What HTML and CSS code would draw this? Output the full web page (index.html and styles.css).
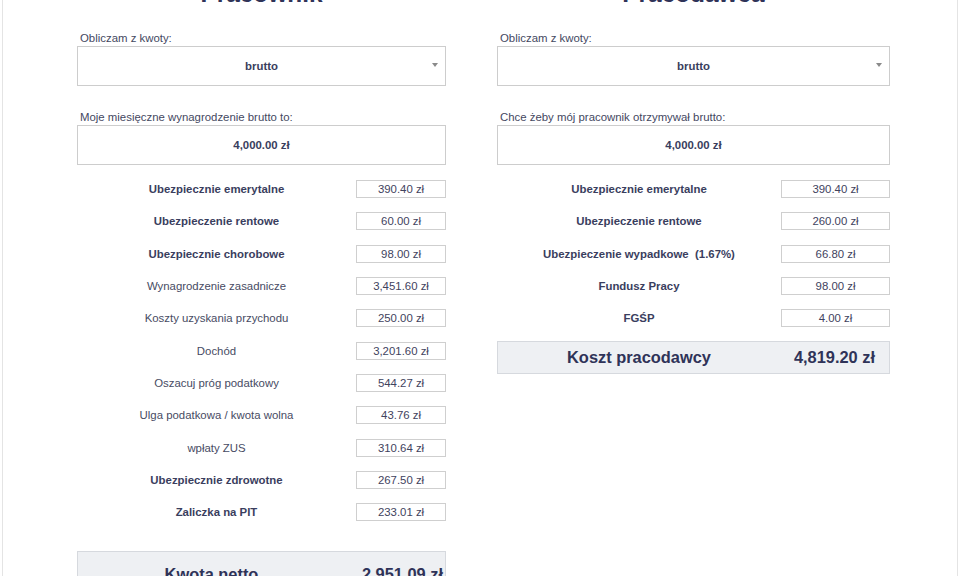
FILE: index.html
```html
<!DOCTYPE html>
<html lang="pl">
<head>
<meta charset="utf-8">
<title>Kalkulator wynagrodzeń</title>
<link rel="stylesheet" href="styles.css">
</head>
<body>
<div class="frame">
  <div class="columns">
    <section class="col col-left">
      <h2 class="title">Pracownik</h2>
      <div class="field">
        <div class="field-label">Obliczam z kwoty:</div>
        <div class="select"><span>brutto</span><i class="arrow"></i></div>
      </div>
      <div class="field field-2">
        <div class="field-label">Moje miesięczne wynagrodzenie brutto to:</div>
        <div class="input"><span>4,000.00 zł</span></div>
      </div>
      <div class="rows">
        <div class="row"><div class="lbl b">Ubezpiecznie emerytalne</div><div class="val">390.40 zł</div></div>
        <div class="row"><div class="lbl b">Ubezpieczenie rentowe</div><div class="val">60.00 zł</div></div>
        <div class="row"><div class="lbl b">Ubezpiecznie chorobowe</div><div class="val">98.00 zł</div></div>
        <div class="row"><div class="lbl">Wynagrodzenie zasadnicze</div><div class="val">3,451.60 zł</div></div>
        <div class="row"><div class="lbl">Koszty uzyskania przychodu</div><div class="val">250.00 zł</div></div>
        <div class="row"><div class="lbl">Dochód</div><div class="val">3,201.60 zł</div></div>
        <div class="row"><div class="lbl">Oszacuj próg podatkowy</div><div class="val">544.27 zł</div></div>
        <div class="row"><div class="lbl">Ulga podatkowa / kwota wolna</div><div class="val">43.76 zł</div></div>
        <div class="row"><div class="lbl">wpłaty ZUS</div><div class="val">310.64 zł</div></div>
        <div class="row"><div class="lbl b">Ubezpiecznie zdrowotne</div><div class="val">267.50 zł</div></div>
        <div class="row"><div class="lbl b">Zaliczka na PIT</div><div class="val">233.01 zł</div></div>
      </div>
      <div class="total total-left"><div class="t-lbl">Kwota netto</div><div class="t-val">2,951.09 zł</div></div>
    </section>
    <section class="col col-right">
      <h2 class="title">Pracodawca</h2>
      <div class="field">
        <div class="field-label">Obliczam z kwoty:</div>
        <div class="select"><span>brutto</span><i class="arrow"></i></div>
      </div>
      <div class="field field-2">
        <div class="field-label">Chce żeby mój pracownik otrzymywał brutto:</div>
        <div class="input"><span>4,000.00 zł</span></div>
      </div>
      <div class="rows">
        <div class="row"><div class="lbl b">Ubezpiecznie emerytalne</div><div class="val">390.40 zł</div></div>
        <div class="row"><div class="lbl b">Ubezpieczenie rentowe</div><div class="val">260.00 zł</div></div>
        <div class="row"><div class="lbl b">Ubezpieczenie wypadkowe&nbsp; (1.67%)</div><div class="val">66.80 zł</div></div>
        <div class="row"><div class="lbl b">Fundusz Pracy</div><div class="val">98.00 zł</div></div>
        <div class="row"><div class="lbl b">FGŚP</div><div class="val">4.00 zł</div></div>
      </div>
      <div class="total total-right"><div class="t-lbl">Koszt pracodawcy</div><div class="t-val">4,819.20 zł</div></div>
    </section>
  </div>
</div>
</body>
</html>
```

FILE: styles.css
```css
html, body {
  margin: 0;
  padding: 0;
  background: #ffffff;
  overflow: hidden;
}
body {
  width: 960px;
  height: 576px;
  font-family: "Liberation Sans", Arial, Helvetica, sans-serif;
  color: #3a3e5e;
  font-size: 11.4px;
}
.frame {
  margin: 0 2px 0 2px;
  height: 576px;
  border-left: 1px solid #e4e4e4;
  border-right: 1px solid #e4e4e4;
  box-sizing: border-box;
}
.columns {
  display: grid;
  grid-template-columns: 369px 393px;
  column-gap: 51px;
  padding-left: 74px;
}
.col {
  display: flex;
  flex-direction: column;
}
.col-left { --valw: 90px; }
.col-right { --valw: 109px; }
.title {
  margin: -18px 0 0 0;
  font-size: 24.4px;
  line-height: 24px;
  font-weight: bold;
  text-align: center;
  color: #2f3358;
}
.field {
  margin-top: 25px;
  display: flex;
  flex-direction: column;
}
.field-2 {
  margin-top: 24px;
}
.field-label {
  line-height: 14px;
  padding-left: 3px;
  margin-bottom: 1px;
  color: #44485f;
}
.select, .input {
  height: 40px;
  border: 1px solid #cdcdcd;
  box-sizing: border-box;
  display: flex;
  align-items: center;
  justify-content: center;
  font-weight: bold;
  position: relative;
  background: #fff;
}
.select span, .input span {
  margin-top: -1px;
}
.arrow {
  position: absolute;
  right: 7px;
  top: 16px;
  width: 0;
  height: 0;
  border-left: 3.5px solid transparent;
  border-right: 3.5px solid transparent;
  border-top: 4px solid #8a8a8a;
}
.rows {
  margin-top: 8px;
  display: flex;
  flex-direction: column;
}
.row {
  height: 32.3px;
  display: flex;
  align-items: center;
}
.lbl {
  flex: 1;
  text-align: center;
  color: #474b63;
}
.lbl.b {
  font-weight: bold;
  color: #3a3e5e;
}
.val {
  width: var(--valw);
  height: 18px;
  box-sizing: border-box;
  border: 1px solid #cfcfcf;
  display: flex;
  align-items: center;
  justify-content: center;
  color: #3f435e;
}
.total {
  height: 33px;
  box-sizing: border-box;
  background: #eef0f3;
  border: 1px solid #d6d9de;
  display: flex;
  align-items: center;
  font-weight: bold;
  font-size: 16.4px;
  color: #2f3358;
}
.total-left { margin-top: 23px; height: 40px; padding-top: 13px; align-items: flex-start; }
.total-right { margin-top: 7px; }
.t-lbl {
  flex: 1;
  text-align: center;
}
.t-val {
  width: var(--valw);
  text-align: center;
}
.total-left .t-val { text-align: right; padding-right: 2px; box-sizing: border-box; width: 100px; }
```
